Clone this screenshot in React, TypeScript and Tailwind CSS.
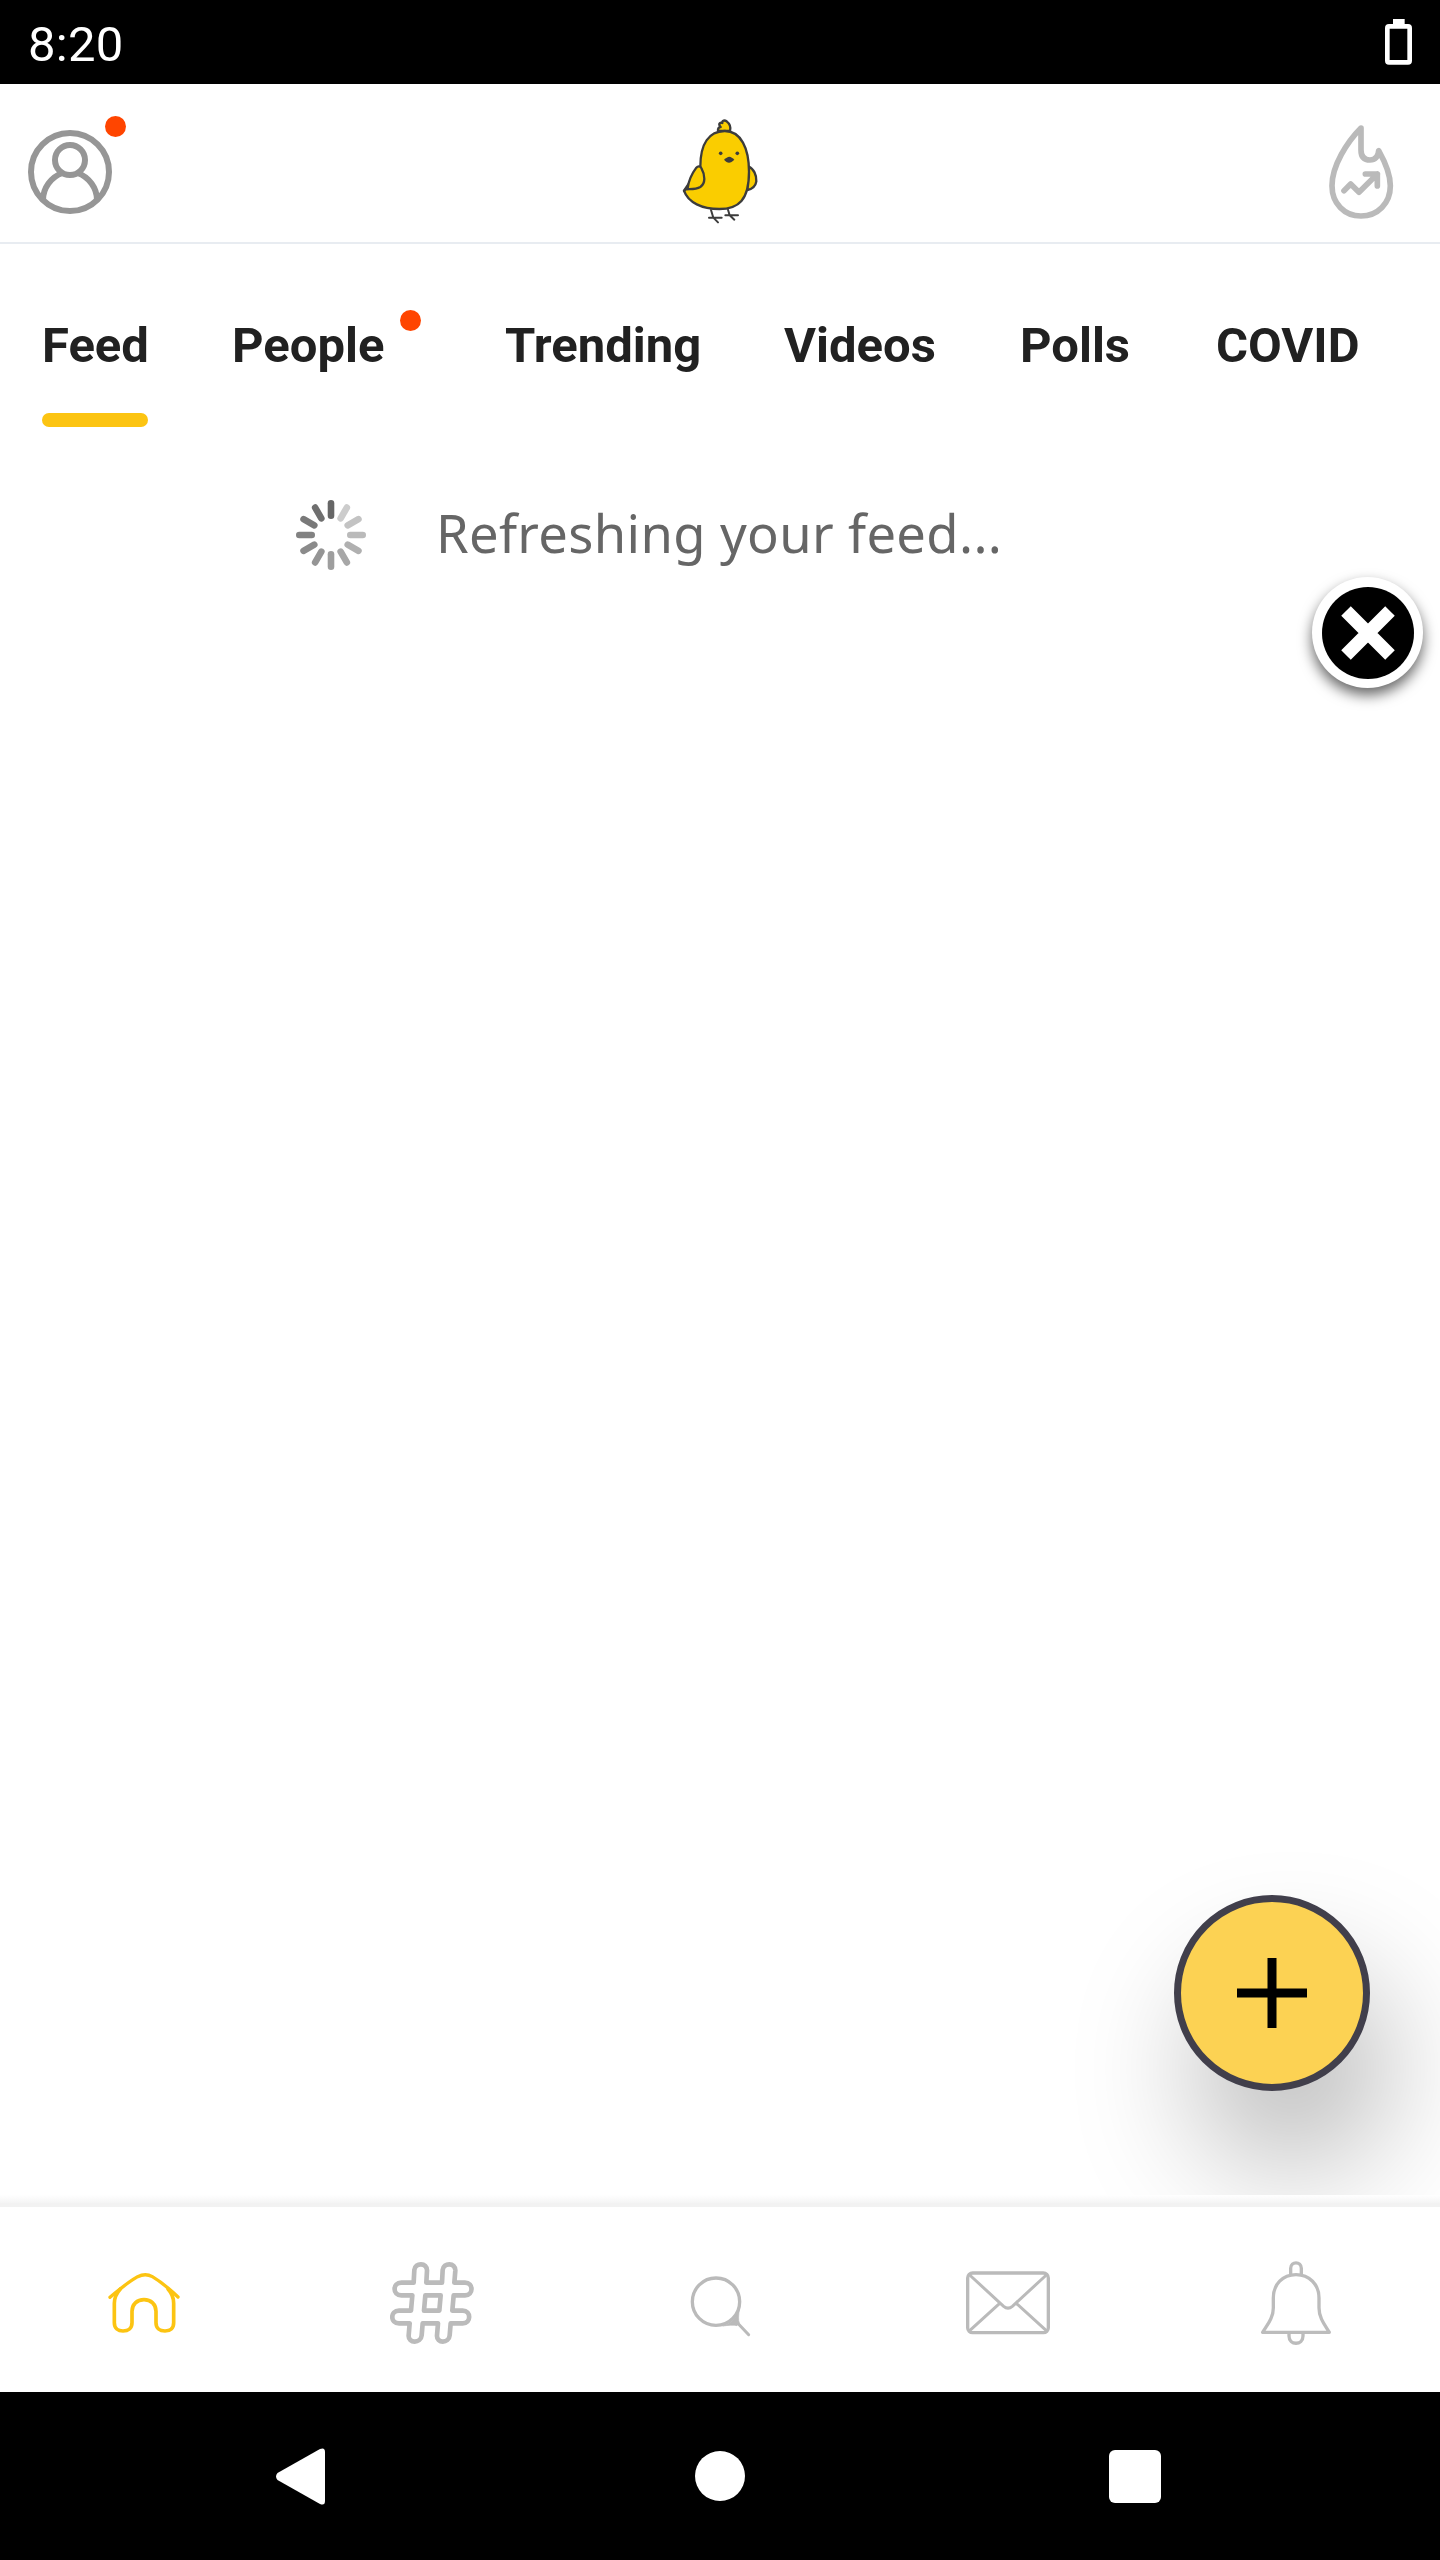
import type { ReactNode } from 'react';

function StatusBar() {
  return (
    <div className="flex h-[84px] items-start justify-between bg-black pl-[28px] pr-[28px] text-white">
      <span className="mt-[16px] text-[49px] leading-[58px] tracking-[0.3px]">8:20</span>
      <svg className="mt-[19px] h-[46px] w-[27px]" viewBox="0 0 81 138">
        <path d="M24 0H59V15H24Z" fill="#fff" />
        <rect x="7" y="22" width="67" height="108" rx="5" fill="none" stroke="#fff" strokeWidth="14" />
      </svg>
    </div>
  );
}

function ProfileIcon() {
  return (
    <svg className="mt-[46px] h-[84px] w-[84px]" viewBox="0 0 84 84" fill="none" stroke="#969696" strokeWidth="6">
      <circle cx="42" cy="42" r="39" />
      <circle cx="42" cy="30" r="15" />
      <path d="M15 70C15 58 23 47 34.5 43M69 70C69 58 61 47 49.5 43" />
    </svg>
  );
}

function ChickLogo() {
  return (
    <svg
      className="mt-[33px] h-[110px] w-[80px]"
      viewBox="60 51 240 330"
      fill="#facd00"
      stroke="#3c3c3c"
      strokeWidth="7"
      strokeLinecap="round"
      strokeLinejoin="round"
    >
      <path d="M266 200C281 206 290 225 289 244C287 257 277 267 262 270Z" />
      <path d="M174 93C173 86 177 80 182 81C174 73 179 66 187 69C186 60 194 60 200 64C209 71 213 82 210 93Z" />
      <path d="M121 200C121 130 148 94 194 93C243 93 267 145 267 215C267 300 236 327 178 327C127 327 84 308 72 272Z" />
      <path d="M72 273C79 264 86 266 83 264C86 243 97 219 109 203C114 197 121 198 124 204C136 226 137 250 121 261C107 269 91 267 79 268" />
      <path d="M153 330L160 353L174 367M147 353H185M204 329L209 346L223 359M196 346H234" fill="none" strokeWidth="6" />
      <g fill="#3c3c3c" stroke="none">
        <circle cx="182" cy="160" r="5.5" />
        <circle cx="232" cy="160" r="5.5" />
        <path d="M192 179C198 174 203 170 208 170C213 170 218 174 223 179C217 184 212 188 207 188C202 188 197 184 192 179Z" />
      </g>
    </svg>
  );
}

function FlameIcon() {
  return (
    <svg
      className="mt-[38px] h-[100px] w-[70px]"
      viewBox="108 366 210 300"
      fill="none"
      stroke="#bababa"
      strokeWidth="17"
      strokeLinecap="round"
      strokeLinejoin="round"
    >
      <path d="M213 384C172 425 126 497 126 557C126 610 163 648 213 648C263 648 301 610 301 557C301 520 284 484 266 452C265 470 255 480 240 480C222 480 213 470 213 450Z" />
      <path d="M162 572L182 552L207 577L262 522M226 522H262V558" />
    </svg>
  );
}

function Header() {
  return (
    <header className="grid h-[160px] grid-cols-3 items-start border-b-2 border-[#e8ecf1]">
      <div className="flex pl-[28px]">
        <ProfileIcon />
        <span className="-ml-[7px] mt-[32px] h-[21px] w-[21px] rounded-full bg-[#ff4500]" />
      </div>
      <div className="flex justify-center">
        <ChickLogo />
      </div>
      <div className="flex justify-end pr-[44px]">
        <FlameIcon />
      </div>
    </header>
  );
}

const tabs = [
  { label: 'Feed', width: 'w-[106px]', active: true },
  { label: 'People', width: 'w-[154px]', dot: true },
  { label: 'Trending', width: 'w-[195px]' },
  { label: 'Videos', width: 'w-[152px]' },
  { label: 'Polls', width: 'w-[112px]' },
  { label: 'COVID', width: 'w-[144px]' },
];

function Tabs() {
  return (
    <nav className="flex gap-[84px] whitespace-nowrap pl-[42px] text-[49px] font-bold leading-[58px] text-[#212121]">
      {tabs.map((tab) => (
        <div key={tab.label} className="flex shrink-0 items-start pt-[73px]">
          <div className={tab.width}>
            <div>{tab.label}</div>
            {tab.active && <div className="mt-[38px] h-[14px] rounded-full bg-[#fcc412]" />}
          </div>
          {tab.dot && <span className="-mt-[7px] ml-[14px] h-[21px] w-[21px] rounded-full bg-[#ff4500]" />}
        </div>
      ))}
    </nav>
  );
}

const spokes = ['#666666', '#cccccc', '#c3c3c3', '#bababa', '#b0b0b0', '#a7a7a7', '#9e9e9e', '#959595', '#8b8b8b', '#828282', '#797979', '#6f6f6f'];

function Spinner() {
  return (
    <svg className="h-[70px] w-[70px]" viewBox="-35 -35 70 70">
      {spokes.map((color, i) => (
        <rect key={i} x="-3.3" y="-35" width="6.6" height="19" rx="3.3" fill={color} transform={`rotate(${i * 30})`} />
      ))}
    </svg>
  );
}

function CloseButton() {
  return (
    <button className="absolute left-[1312px] top-[577px] flex h-[111px] w-[111px] items-center justify-center rounded-full bg-white shadow-[0_7px_14px_rgba(0,0,0,0.6)]">
      <svg className="h-[92px] w-[92px]" viewBox="-46 -46 92 92">
        <circle r="46" />
        <path d="M-22 -22L22 22M22 -22L-22 22" stroke="#fff" strokeWidth="13.5" />
      </svg>
    </button>
  );
}

function ComposeButton() {
  return (
    <button className="absolute left-[1174px] top-[1895px] flex h-[196px] w-[196px] items-center justify-center rounded-full border-[7px] border-[#413f4b] bg-[#fcd253] shadow-[20px_76px_125px_rgba(0,0,0,0.27)]">
      <svg className="h-[70px] w-[70px]" viewBox="0 0 70 70" stroke="#000" strokeWidth="9">
        <path d="M35 0V70M0 35H70" />
      </svg>
    </button>
  );
}

function NavIcon({ viewBox, color, width, children }: { viewBox: string; color: string; width: number; children: ReactNode }) {
  return (
    <div className="flex flex-1 justify-center pt-[54px]">
      <svg
        className="h-[84px] w-[84px]"
        viewBox={viewBox}
        fill="none"
        stroke={color}
        strokeWidth={width}
        strokeLinecap="round"
        strokeLinejoin="round"
      >
        {children}
      </svg>
    </div>
  );
}

function BottomNav() {
  return (
    <div className="relative">
      <div className="h-[8px] bg-linear-to-b from-white to-[#f4f4f4]" />
      <div className="flex h-[189px] border-t-4 border-[#f2f2f2] bg-white">
        <NavIcon viewBox="66 243 252 252" color="#fcc412" width={11}>
          <path d="M90 352C118 328 145 306 173 290C189 282 203 282 217 290C244 306 270 328 294 351" strokeWidth="10" />
          <path d="M121 327C110 339 103 354 103 370V428C103 444 114 453 129 453C145 453 156 444 156 428V394C156 373 171 359 192 359C213 359 228 373 228 394V428C228 444 239 453 255 453C271 453 281 444 281 428V370C281 354 275 339 264 327" />
        </NavIcon>
        <NavIcon viewBox="930 243 252 252" color="#bbbbbb" width={14}>
          <path d="M1001 308L1003 270C1005 247 1042 247 1041 272L1039 308H1086L1088 270C1090 247 1127 247 1126 272L1123 308H1155C1181 308 1181 346 1155 346H1121L1117 392H1148C1174 392 1174 430 1148 430H1112L1109 466C1107 491 1069 491 1071 466L1074 430H1028L1025 466C1023 491 984 491 986 466L989 430H957C930 430 930 392 957 392H993L997 346H964C937 346 937 308 964 308Z" />
          <path d="M1036 346H1082L1078 392H1032Z" />
        </NavIcon>
        <NavIcon viewBox="54 63 252 252" color="#bababa" width={9}>
          <circle cx="168" cy="185" r="71" strokeWidth="10" />
          <path d="M232 248L266 284" />
          <path d="M238 207C236 225 234 240 238 249L231 257C220 254 206 256 188 258C214 251 231 232 238 207Z" fill="#bababa" strokeWidth="2" />
        </NavIcon>
        <NavIcon viewBox="918 63 252 252" color="#bababa" width={10}>
          <rect x="923" y="99" width="242" height="179" rx="15" />
          <path d="M929 105L1031 199Q1044 210 1057 199L1159 105M929 272L1019 190M1159 272L1069 190" strokeWidth="9" />
        </NavIcon>
        <NavIcon viewBox="102 63 252 252" color="#bcbcbc" width={10}>
          <path d="M128 277H328C315 255 297 235 297 203V174C297 133 268 104 228 104C188 104 160 133 160 174V203C160 235 141 255 128 277Z" />
          <path d="M212 103V85C212 63 244 63 244 85V103M207 281V288C207 317 249 317 249 288V281" />
        </NavIcon>
      </div>
    </div>
  );
}

function SystemNav() {
  return (
    <div className="relative flex h-[168px] items-center bg-black pl-[276px]">
      <svg className="h-[57px] w-[49px]" viewBox="0 0 49 57">
        <path d="M1.5 25L44 1Q49 -1 49 4V53Q49 58 44 56L1.5 32Q-1.5 28.5 1.5 25Z" fill="#fff" />
      </svg>
      <span className="ml-[370px] h-[50px] w-[50px] rounded-full bg-white" />
      <span className="ml-[363.5px] h-[53px] w-[52px] rounded-[6px] bg-white" />
    </div>
  );
}

export default function App() {
  return (
    <div className="relative flex h-[2560px] w-[1440px] flex-col overflow-hidden bg-white font-[Roboto,sans-serif]">
      <StatusBar />
      <Header />
      <Tabs />
      <main className="flex flex-1 items-start pl-[296px] pt-[73px]">
        <Spinner />
        <p className="-mt-[2px] ml-[70px] whitespace-nowrap font-['Noto_Sans',sans-serif] text-[52.5px] leading-[70px] tracking-[0.35px] text-[#666666]">
          Refreshing your feed...
        </p>
      </main>
      <CloseButton />
      <ComposeButton />
      <BottomNav />
      <SystemNav />
    </div>
  );
}
